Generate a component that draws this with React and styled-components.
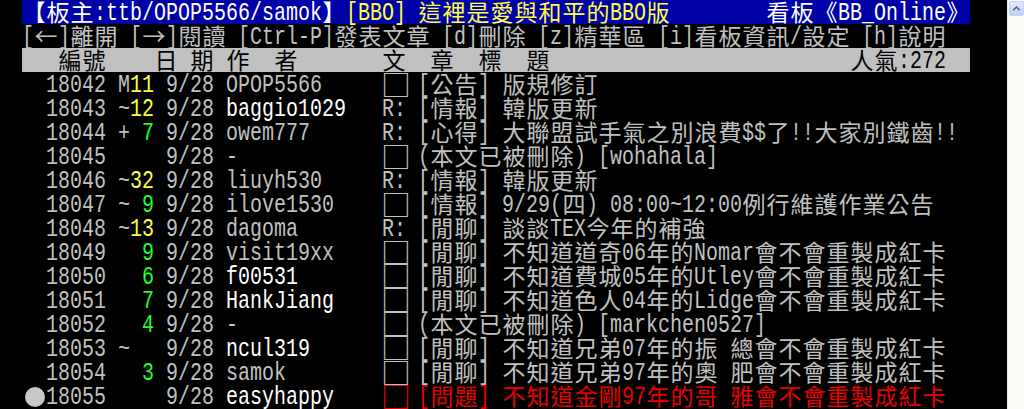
import React from 'react'
import styled, { createGlobalStyle } from 'styled-components'

const CELL = 12
const ROW = 24
const BAR_COLS = 79

const GREY = '#c0c0c0'
const WHITE = '#ffffff'
const YELLOW = '#ffff3c'
const GREEN = '#22ff22'
const RED = '#e80000'

const GlobalStyle = createGlobalStyle`
  html, body {
    margin: 0;
    padding: 0;
    background: #000;
  }
  body {
    width: 1024px;
    height: 409px;
    overflow: hidden;
  }
`

const isWide = ch => ch.codePointAt(0) > 0x7e
const colsOf = s => [...s].reduce((n, ch) => n + (isWide(ch) ? 2 : 1), 0)
const padTo = (s, cols) => s + ' '.repeat(Math.max(0, cols - colsOf(s)))

// the empty box glyph gets its own run so it can be drawn full cell size
const kindOf = ch => (ch === '□' ? 'box' : isWide(ch) ? 'wide' : 'half')

const splitRuns = text => {
  const runs = []
  for (const ch of text) {
    const kind = kindOf(ch)
    const last = runs[runs.length - 1]
    if (last && last.kind === kind && kind !== 'box') last.text += ch
    else runs.push({ kind, text: ch })
  }
  return runs
}

const Text = ({ children, color }) => (
  <Segment $color={color}>
    {splitRuns(children).map((r, i) => {
      if (r.kind === 'half')
        return (
          <Half key={i} $cols={r.text.length}>
            <HalfInk>{r.text}</HalfInk>
          </Half>
        )
      if (r.kind === 'box')
        return (
          <Wide key={i} $cols={2}>
            <BoxInk>{r.text}</BoxInk>
          </Wide>
        )
      return <Wide key={i} $cols={colsOf(r.text)}>{r.text}</Wide>
    })}
  </Segment>
)

const posts = [
  { num: '18042', mark: 'M', count: '11', date: '9/28', author: 'OPOP5566', kind: '□', title: '[公告] 版規修訂' },
  { num: '18043', mark: '~', count: '12', date: '9/28', author: 'baggio1029', bright: true, kind: 'R:', title: '[情報] 韓版更新' },
  { num: '18044', mark: '+', count: '7', date: '9/28', author: 'owem777', kind: 'R:', title: '[心得] 大聯盟試手氣之別浪費$$了!!大家別鐵齒!!' },
  { num: '18045', mark: ' ', count: '', date: '9/28', author: '-', kind: '□', title: '(本文已被刪除) [wohahala]' },
  { num: '18046', mark: '~', count: '32', date: '9/28', author: 'liuyh530', kind: 'R:', title: '[情報] 韓版更新' },
  { num: '18047', mark: '~', count: '9', date: '9/28', author: 'ilove1530', kind: '□', title: '[情報] 9/29(四) 08:00~12:00例行維護作業公告' },
  { num: '18048', mark: '~', count: '13', date: '9/28', author: 'dagoma', kind: 'R:', title: '[閒聊] 談談TEX今年的補強' },
  { num: '18049', mark: ' ', count: '9', date: '9/28', author: 'visit19xx', kind: '□', title: '[閒聊] 不知道道奇06年的Nomar會不會重製成紅卡' },
  { num: '18050', mark: ' ', count: '6', date: '9/28', author: 'f00531', bright: true, kind: '□', title: '[閒聊] 不知道費城05年的Utley會不會重製成紅卡' },
  { num: '18051', mark: ' ', count: '7', date: '9/28', author: 'HankJiang', bright: true, kind: '□', title: '[閒聊] 不知道色人04年的Lidge會不會重製成紅卡' },
  { num: '18052', mark: ' ', count: '4', date: '9/28', author: '-', kind: '□', title: '(本文已被刪除) [markchen0527]' },
  { num: '18053', mark: '~', count: '', date: '9/28', author: 'ncul319', bright: true, kind: '□', title: '[閒聊] 不知道兄弟07年的振 總會不會重製成紅卡' },
  { num: '18054', mark: ' ', count: '3', date: '9/28', author: 'samok', kind: '□', title: '[閒聊] 不知道兄弟97年的奧 肥會不會重製成紅卡' },
  { num: '18055', mark: ' ', count: '', date: '9/28', author: 'easyhappy', bright: true, kind: '□', title: '[問題] 不知道金剛97年的哥 雅會不會重製成紅卡', red: true, cursor: true },
]

const countColor = c => (Number(c) >= 10 ? YELLOW : GREEN)

const PostRow = ({ post }) => {
  const titleColor = post.red ? RED : GREY
  return (
    <Line>
      {post.cursor ? <Cursor /> : <Text>{'  '}</Text>}
      <Text color={GREY}>{post.num + ' ' + post.mark}</Text>
      <Text color={countColor(post.count)}>{post.count.padStart(2, ' ')}</Text>
      <Text color={GREY}>{' ' + post.date + ' '}</Text>
      <Text color={post.bright ? WHITE : GREY}>{padTo(post.author, 13)}</Text>
      <Text color={titleColor}>{post.kind + ' ' + post.title}</Text>
    </Line>
  )
}

const App = () => (
  <Window>
    <GlobalStyle />
    <Terminal>
      <Line $bar $bg="#0000a8">
        <Text color={WHITE}>【板主:ttb/OPOP5566/samok】</Text>
        <Text color={YELLOW}>{padTo('[BBO] 這裡是愛與和平的BBO版', 35)}</Text>
        <Text color={WHITE}>看板《BB_Online》</Text>
      </Line>
      <Line>
        <Text color={GREY}>[←]離開 [→]閱讀 [Ctrl-P]發表文章 [d]刪除 [z]精華區 [i]看板資訊/設定 [h]說明</Text>
      </Line>
      <Line $bar $bg={GREY}>
        <Text color="#000">{padTo('   編號    日 期 作  者       文  章  標  題', 69) + '人氣:272'}</Text>
      </Line>
      {posts.map(p => (
        <PostRow key={p.num} post={p} />
      ))}
    </Terminal>
    <Scrollbar>
      <ArrowButton>
        <svg width="9" height="7" viewBox="0 0 9 7">
          <polyline points="1.2,5.2 4.5,2 7.8,5.2" fill="none" stroke="#4d6185" strokeWidth="1.6" />
        </svg>
      </ArrowButton>
    </Scrollbar>
  </Window>
)

export default App

const Window = styled.div`
  display: flex;
  width: 1024px;
  height: 409px;
  background: #000;
  overflow: hidden;
`

const Terminal = styled.div`
  flex: 1;
  display: flex;
  flex-direction: column;
  padding-left: 22px;
`

const Line = styled.div`
  display: flex;
  flex: none;
  height: ${ROW}px;
  width: ${p => (p.$bar ? `${BAR_COLS * CELL}px` : 'auto')};
  background: ${p => p.$bg || 'transparent'};
  color: ${GREY};
  white-space: pre;
`

const Segment = styled.span`
  display: flex;
  flex: none;
  color: ${p => p.$color || 'inherit'};
`

const Half = styled.span`
  display: block;
  flex: none;
  width: ${p => p.$cols * CELL}px;
  height: ${ROW}px;
  overflow: visible;
`

const HalfInk = styled.span`
  display: inline-block;
  font-family: "Liberation Mono", monospace;
  font-size: 24px;
  line-height: ${ROW}px;
  transform: translateY(0.5px) scale(0.8333, 1.06);
  transform-origin: 0 0;
`

const Wide = styled.span`
  display: block;
  flex: none;
  box-sizing: border-box;
  width: ${p => p.$cols * CELL}px;
  height: ${ROW}px;
  padding-left: 0.5px;
  font-family: "Noto Sans CJK TC", "Noto Sans CJK SC", sans-serif;
  font-size: 23px;
  letter-spacing: 1px;
  line-height: ${ROW}px;
  transform: translateY(-1px);
`

const BoxInk = styled.span`
  display: inline-block;
  transform: translate(1.5px, -0.5px) scale(1.3);
  transform-origin: 50% 50%;
`

const Cursor = styled.span`
  display: block;
  flex: none;
  width: ${2 * CELL}px;
  height: ${ROW}px;

  &::before {
    content: '';
    display: block;
    width: 20px;
    height: 20px;
    margin: 3px 0 0 3px;
    border-radius: 50%;
    background: #c8c8c8;
  }
`

const Scrollbar = styled.div`
  flex: none;
  width: 17px;
  height: 100%;
  box-sizing: border-box;
  padding: 1px 1px 0 1px;
  background: #fbfbf8;
  border-left: 1px solid #ecebe4;
`

const ArrowButton = styled.div`
  display: flex;
  align-items: center;
  justify-content: center;
  width: 15px;
  height: 15px;
  box-sizing: border-box;
  border: 1px solid #c5d4fb;
  border-radius: 2px;
  background: linear-gradient(#e2eafe, #bfcff7);
`
